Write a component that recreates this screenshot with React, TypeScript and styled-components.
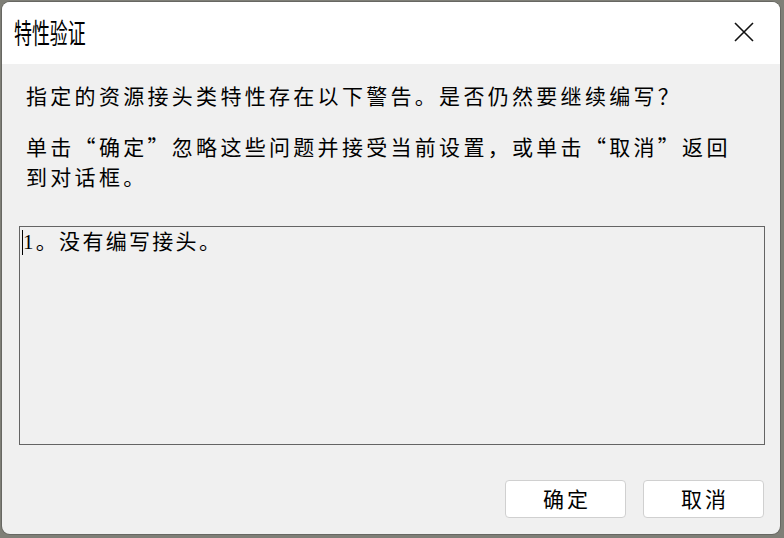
import React from "react";
import styled, { createGlobalStyle } from "styled-components";

const GlobalStyle = createGlobalStyle`
  html, body {
    margin: 0;
    padding: 0;
    background: #7f7f77;
  }
`;

const Page = styled.div`
  width: 784px;
  height: 538px;
  box-sizing: border-box;
  padding: 2px 4px 4px 2px;
`;

const Window = styled.div`
  width: 778px;
  height: 532px;
  border-radius: 8px;
  overflow: hidden;
  background: #f0f0f0;
  display: flex;
  flex-direction: column;
  box-shadow: 0 0 0 1px rgba(60, 60, 60, 0.35);
`;

const TitleBar = styled.div`
  height: 62px;
  flex: none;
  background: #ffffff;
  display: flex;
  align-items: center;
  justify-content: space-between;
  padding: 0 26px 0 12px;
  box-sizing: border-box;
`;

const Title = styled.div`
  font-family: "Noto Sans CJK SC", sans-serif;
  font-size: 28px;
  color: #000;
  transform: scaleX(0.64);
  transform-origin: left center;
  white-space: nowrap;
  margin-top: -3px;
`;

const CloseButton = styled.div`
  width: 20px;
  height: 20px;
  margin-top: -2px;
  display: flex;
`;

const Body = styled.div`
  flex: 1;
  display: flex;
  flex-direction: column;
  padding: 16px 16px 16px 17px;
`;

const Message = styled.p<{ $gap?: number }>`
  margin: 0 0 ${(p) => p.$gap ?? 0}px 7px;
  width: 716px;
  font-family: "Noto Sans CJK SC", sans-serif;
  font-size: 21px;
  line-height: 30px;
  letter-spacing: 3.3px;
  color: #000;
`;

const ListBox = styled.div`
  width: 746px;
  height: 219px;
  box-sizing: border-box;
  border: 1px solid #646464;
  padding: 0 0 0 2px;
  font-family: "Liberation Serif", "Noto Sans CJK SC", serif;
  font-size: 21px;
  line-height: 30px;
  letter-spacing: 2.3px;
  color: #000;
  display: flex;
  align-items: flex-start;
`;

const Caret = styled.span`
  display: inline-block;
  width: 1px;
  height: 25px;
  margin-top: 3px;
  background: #000;
`;

const ButtonRow = styled.div`
  margin-top: auto;
  display: flex;
  justify-content: flex-end;
  gap: 17px;
`;

const Button = styled.button`
  width: 121px;
  height: 38px;
  border: 1px solid #d0d0d0;
  border-radius: 4px;
  background: #ffffff;
  font-family: "Noto Sans CJK SC", sans-serif;
  font-size: 21px;
  letter-spacing: 3px;
  padding: 0 0 2px 3px;
  color: #000;
  display: flex;
  align-items: center;
  justify-content: center;
`;

export default function App() {
  return (
    <>
      <GlobalStyle />
      <Page>
        <Window>
          <TitleBar>
            <Title>特性验证</Title>
            <CloseButton>
              <svg width="20" height="20" viewBox="0 0 20 20">
                <path d="M1 1 L19 19 M19 1 L1 19" stroke="#111" strokeWidth="1.6" fill="none" />
              </svg>
            </CloseButton>
          </TitleBar>
          <Body>
            <Message $gap={21}>指定的资源接头类特性存在以下警告。是否仍然要继续编写？</Message>
            <Message $gap={35}>单击“确定”忽略这些问题并接受当前设置，或单击“取消”返回到对话框。</Message>
            <ListBox>
              <Caret />
              <span>1。没有编写接头。</span>
            </ListBox>
            <ButtonRow>
              <Button>确定</Button>
              <Button>取消</Button>
            </ButtonRow>
          </Body>
        </Window>
      </Page>
    </>
  );
}
